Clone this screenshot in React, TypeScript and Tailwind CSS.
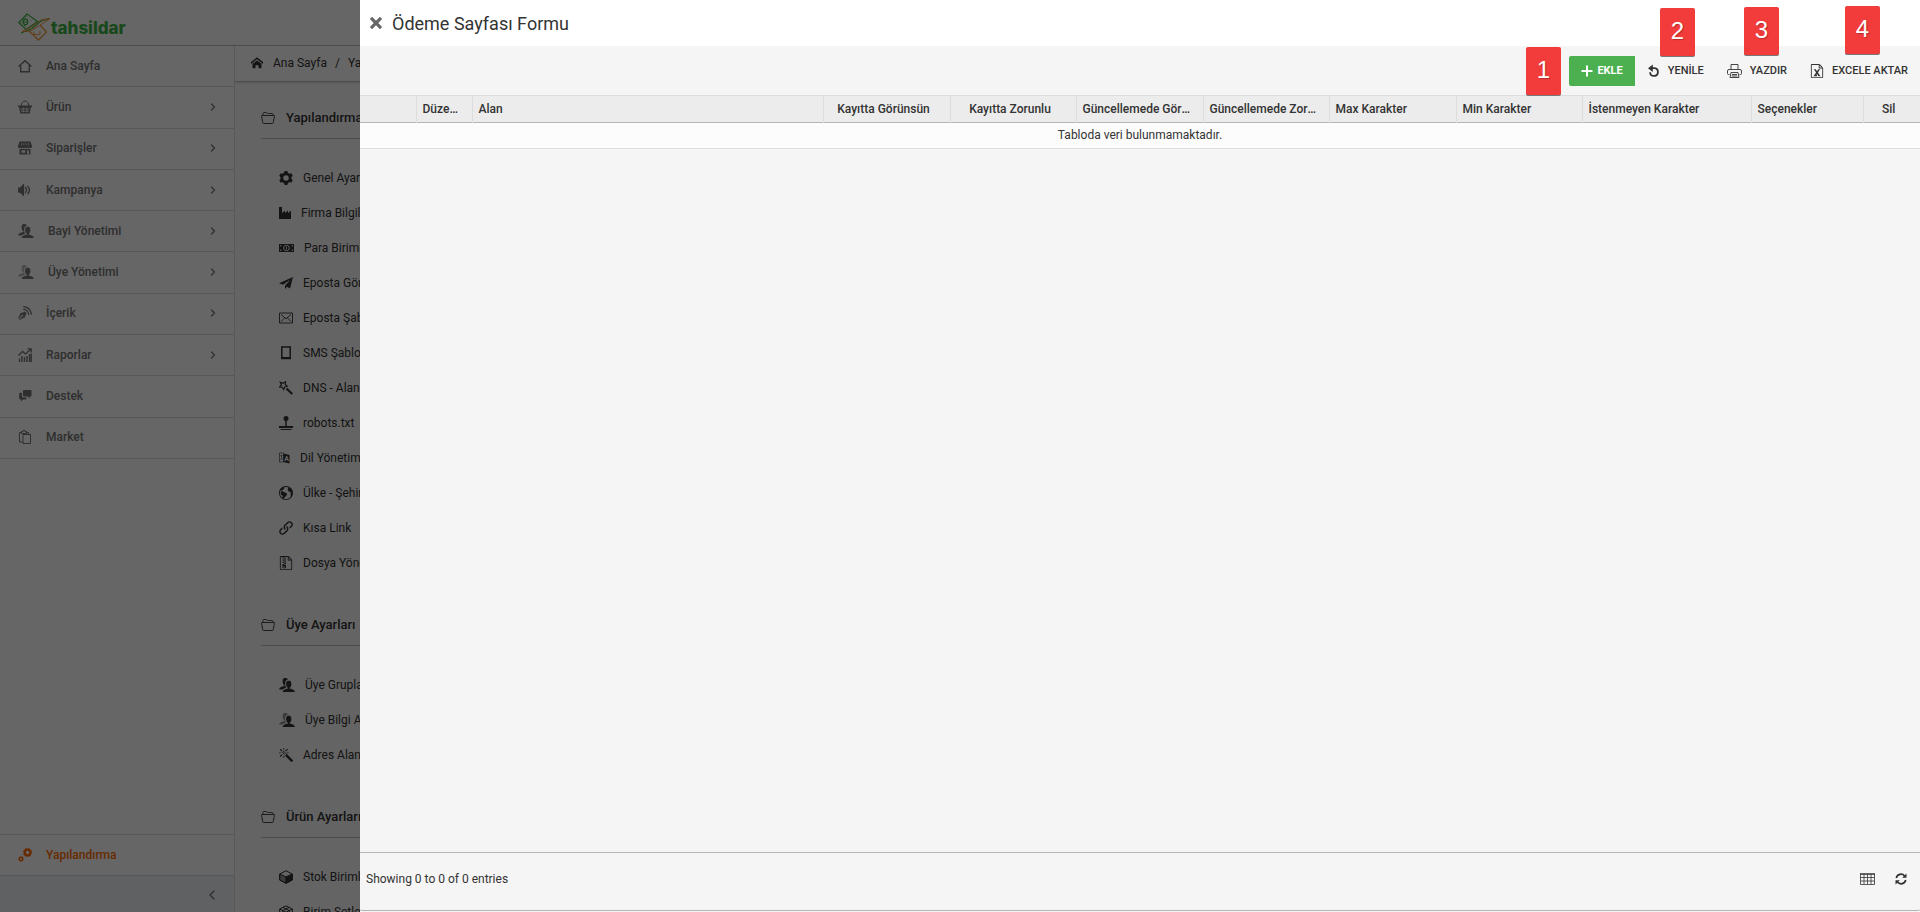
import type { ReactNode } from "react";
import clsx from "clsx";
import {
  ImBlog,
  ImCog,
  ImCross,
  ImEarth,
  ImFileExcel,
  ImFileZip,
  ImHome,
  ImLink,
  ImMagicWand,
  ImUsers,
  ImVolumeMedium,
} from "react-icons/im";
import { FiChevronLeft, FiChevronRight } from "react-icons/fi";

interface GlyphProps {
  children: ReactNode;
  w?: number;
  h?: number;
  sw?: number;
}

// Line icon on a 1:1 pixel grid
const Glyph = ({ children, w = 14, h = 14, sw = 1 }: GlyphProps) => (
  <svg
    width={w}
    height={h}
    viewBox={`0 0 ${w} ${h}`}
    fill="none"
    stroke="currentColor"
    strokeWidth={sw}
    className="shrink-0"
    aria-hidden="true"
  >
    {children}
  </svg>
);

const HouseIcon = () => (
  <Glyph sw={1.4}>
    <path d="M.6 7.6 7 1.8l6.4 5.8M2.7 6.6v6.2h8.6V6.6" />
  </Glyph>
);

const BasketIcon = () => (
  <Glyph>
    <path d="M3 6c.4-3 2-5 4-5s3.600 2 4 5" />
    <path d="M0 5.500h14v1.500H13l-1.300 6.500H2.300L1 7H0z" fill="currentColor" stroke="none" />
    <path d="M2.500 9h9M3 11.300h8M5.200 7.500v5M8.800 7.500v5" stroke="#fff" strokeWidth=".8" />
  </Glyph>
);

const StoreIcon = () => (
  <Glyph>
    <path
      d="M1.500.5h11L14 5v1a1.300 1.300 0 0 1-2.300.6 1.300 1.300 0 0 1-2.400 0 1.400 1.400 0 0 1-2.300 0 1.400 1.400 0 0 1-2.300 0 1.300 1.300 0 0 1-2.400 0A1.300 1.300 0 0 1 0 6V5zM1.500 8h11v5.500h-11z"
      fill="currentColor"
      stroke="none"
    />
    <path d="M3.500 9.300h3.700v2.400H3.500zM9.200 9.300h1.700v4.200H9.200z" fill="#fff" stroke="none" />
    <path d="M3.500 2v2.500M5.800 2v2.500M8.200 2v2.500M10.500 2v2.500" stroke="#fff" strokeWidth=".6" />
  </Glyph>
);

const UsersIcon = ({ faded = false }: { faded?: boolean }) => (
  <ImUsers className={clsx("w-4 h-3.5 shrink-0", faded && "[&>path:last-child]:opacity-50")} />
);

const ReportIcon = () => (
  <Glyph>
    <path d="M.5 7.500 4.500 3.500l3 2.500 5-4.500M9.500.8h3.700v3.700" strokeWidth="1.300" />
    <path d="M1.500 10.500V14M4 8v6M6.500 9v5M9 8v6M11.500 6v8M13.200 5.500V14" strokeWidth="1.400" />
  </Glyph>
);

const ChatIcon = () => (
  <Glyph>
    <path
      d="M6 1h6.500a1 1 0 0 1 1 1v4.500a1 1 0 0 1-1 1H12v2l-2-2H6a1 1 0 0 1-1-1V2a1 1 0 0 1 1-1zM4 3.800V7a1.500 1.500 0 0 0 1.500 1.500h3v1a1 1 0 0 1-1 1H5l-2 2v-2h-.8a1 1 0 0 1-1-1V4.800a1 1 0 0 1 1-1z"
      fill="currentColor"
      stroke="none"
    />
  </Glyph>
);

const MarketIcon = () => (
  <Glyph>
    <path d="M4.500 12H1.500V2.500h2M8.500 2.500h2V4M3.500 3.500v-2h1.500v-1h2v1h1.500v2z" />
    <path d="M5 4.500h7.500v9H5z" />
  </Glyph>
);

const GearsIcon = () => (
  <Glyph>
    <circle cx="9.500" cy="4.500" r="2.800" strokeWidth="2.200" />
    <circle cx="9.500" cy="4.500" r="4.200" strokeDasharray="1.650 1.650" />
    <circle cx="3" cy="11" r="1.700" strokeWidth="1.500" />
    <circle cx="3" cy="11" r="2.700" strokeWidth=".6" strokeDasharray="1.060 1.060" />
  </Glyph>
);

const FolderIcon = () => (
  <Glyph h={12}>
    <path d="M2 3.500V1.500a1 1 0 0 1 1-1h2.500l1 1h4.500a1 1 0 0 1 1 1v1" strokeWidth=".8" />
    <path
      d="M1 3.500h12c.4 0 .6.200.5.600l-1.300 6.700c-.1.500-.3.700-.7.700h-9c-.4 0-.6-.2-.7-.7L.5 4.100c0-.4.100-.6.500-.6z"
      strokeWidth=".9"
    />
  </Glyph>
);

const FactoryIcon = () => (
  <Glyph w={12}>
    <path d="M0 13V1h3v6l3-2.500V7l3-2.500V7l3-2.500V13z" fill="currentColor" stroke="none" />
  </Glyph>
);

const MoneyIcon = () => (
  <Glyph w={15} h={10}>
    <path d="M0 1h15v8H0z" fill="currentColor" stroke="none" />
    <circle cx="7.500" cy="5" r="2.800" stroke="#fff" strokeWidth=".9" />
    <path d="M7.500 3.500v3M1.500 3.500v-1h1M13.500 3.500v-1h-1M1.500 6.500v1h1M13.500 6.500v1h-1" stroke="#fff" strokeWidth=".8" />
  </Glyph>
);

const PlaneIcon = () => (
  <Glyph>
    <path d="M14 1 0 7.200l4 1.600L11.500 3.500 6 9.800V13l2-2.300 3 1.800z" fill="currentColor" stroke="none" />
  </Glyph>
);

const MailIcon = () => (
  <Glyph h={12}>
    <path d="M.5 1h13v10H.5zM2 2.500 7 6.800l5-4.300M2 9.500l3.300-3.300M12 9.500 8.700 6.200" strokeWidth=".9" />
  </Glyph>
);

const TabletIcon = () => (
  <Glyph>
    <path d="M2.800 1h8.400v11.500H2.800z" strokeWidth="1.500" />
    <path d="M2.500 12h9" strokeWidth="2" />
  </Glyph>
);

const WandIcon = () => (
  <Glyph>
    <path d="M7.500 7.500 13.300 13" strokeWidth="2.200" />
    <path d="M1.300 1.200 4 2.300 6.500.8 6.300 3.500 8.200 5.300 5.700 6 4.600 8.500 3.200 6.200.6 6 2.400 4z" strokeWidth="1.200" />
  </Glyph>
);

const JoystickIcon = () => (
  <Glyph>
    <circle cx="7" cy="2.500" r="2.500" fill="currentColor" stroke="none" />
    <path d="M7 4v7" strokeWidth="1.500" />
    <path d="M0 11h14" strokeWidth="2" />
    <path d="M1.500 13.500h11" />
  </Glyph>
);

const LanguageIcon = () => (
  <Glyph w={11} h={12}>
    <path d="M.5 1h4v9h-4zM1.500 3.500h2M2.500 3v3.500L1.500 8M2.500 6l1.200 1.500" strokeWidth=".6" />
    <path d="M4.500 1.500 10.500 3v8.500L4.500 10z" fill="currentColor" stroke="none" />
    <text x="7.500" y="9" fontSize="7" fontWeight="700" textAnchor="middle" fill="#fff" stroke="none">
      A
    </text>
  </Glyph>
);

const CubeIcon = () => (
  <Glyph>
    <path d="M7 .8 13.300 4v6L7 13.300.7 10V4z" />
    <path d="M7 6.800 13.300 4v6L7 13.300z" fill="currentColor" />
    <path d="M.7 4 7 6.800v6.500L.7 10z" fill="currentColor" fillOpacity=".5" />
  </Glyph>
);

const CubesIcon = () => (
  <Glyph>
    <path d="M7 .8 13.300 4v6L7 13.300.7 10V4zM.7 4 7 7.200 13.300 4M7 7.200v6M4 2.400l6.300 3.200v6M10 2.400 3.700 5.600v6M.7 7 7 10.200 13.300 7" />
  </Glyph>
);

const PlusIcon = () => (
  <Glyph w={12} h={12} sw={2}>
    <path d="M6 .5v11M.5 6h11" />
  </Glyph>
);

const UndoIcon = () => (
  <Glyph w={12} h={13} sw={1.8}>
    <path d="M3.500 4.200h3a3.900 3.900 0 1 1-4.400 4" />
    <path d="M0 4.200 4.800.5v7.400z" fill="currentColor" stroke="none" />
  </Glyph>
);

const PrinterIcon = () => (
  <Glyph w={15} h={14}>
    <path
      d="M4 5.500V.5h7v5M2.500 10.500H1.500a1 1 0 0 1-1-1V7a1.500 1.500 0 0 1 1.500-1.500h11A1.500 1.500 0 0 1 14.500 7v2.500a1 1 0 0 1-1 1h-1M4 8.500h7l1 5H3zM5 10.500h5M4.700 12h5.600"
      strokeWidth=".9"
    />
  </Glyph>
);

const GridIcon = () => (
  <Glyph w={15} h={12}>
    <path d="M.5 1v10.500h14V1M.5 4.500h14M.5 8h14M4 1v10M7.500 1v10M11 1v10" strokeWidth=".8" />
    <path d="M0 1h15" strokeWidth="1.500" />
  </Glyph>
);

const RefreshIcon = () => (
  <Glyph w={12} h={12} sw={1.7}>
    <path d="M1.300 5A4.700 4.700 0 0 1 9.600 3M10.700 7A4.700 4.700 0 0 1 2.400 9" />
    <path d="M11.500.5v4.300H7.200zM.5 11.500V7.200h4.300z" fill="currentColor" stroke="none" />
  </Glyph>
);

const LogoMark = () => (
  <svg width="32" height="29" viewBox="0 0 32 29" fill="none" aria-hidden="true">
    <path d="M9 1 .8 9.500 8 16.500 19.500 8.500z" stroke="#43b649" strokeWidth="1.300" />
    <path d="M9 3.500 3.300 9.500 8 14" stroke="#43b649" strokeDasharray="1 1" />
    <ellipse cx="7.500" cy="9" rx="2.200" ry="2.800" stroke="#43b649" strokeWidth="1.300" />
    <path d="M6 9h3M12 6.500l1 1" stroke="#43b649" />
    <path d="M3 20 14 15.500 23 8 31 5.500" stroke="#43b649" strokeWidth="1.300" />
    <path d="M4 18.500 15 13l8-6 9-1.500L21 13l-9 5z" stroke="#f29a3f" strokeWidth="1" />
    <path d="m11 18 9.500 9 8-8-6.500-7" stroke="#f29a3f" strokeWidth="1.300" />
    <path d="M16 18.500v3h3M19 22l3-1v-3" stroke="#f29a3f" />
  </svg>
);

interface MenuEntry {
  label: string;
  icon: ReactNode;
  expandable?: boolean;
}

const menu: MenuEntry[] = [
  { label: "Ana Sayfa", icon: <HouseIcon /> },
  { label: "Ürün", icon: <BasketIcon />, expandable: true },
  { label: "Siparişler", icon: <StoreIcon />, expandable: true },
  { label: "Kampanya", icon: <ImVolumeMedium size={14} />, expandable: true },
  { label: "Bayi Yönetimi", icon: <UsersIcon />, expandable: true },
  { label: "Üye Yönetimi", icon: <UsersIcon faded />, expandable: true },
  { label: "İçerik", icon: <ImBlog size={14} />, expandable: true },
  { label: "Raporlar", icon: <ReportIcon />, expandable: true },
  { label: "Destek", icon: <ChatIcon /> },
  { label: "Market", icon: <MarketIcon /> },
];

const sections: { title: string; items: MenuEntry[] }[] = [
  {
    title: "Yapılandırma",
    items: [
      { label: "Genel Ayarlar", icon: <ImCog size={14} /> },
      { label: "Firma Bilgileri", icon: <FactoryIcon /> },
      { label: "Para Birimleri", icon: <MoneyIcon /> },
      { label: "Eposta Gönderim", icon: <PlaneIcon /> },
      { label: "Eposta Şablonları", icon: <MailIcon /> },
      { label: "SMS Şablonları", icon: <TabletIcon /> },
      { label: "DNS - Alan Adı", icon: <WandIcon /> },
      { label: "robots.txt", icon: <JoystickIcon /> },
      { label: "Dil Yönetimi", icon: <LanguageIcon /> },
      { label: "Ülke - Şehir", icon: <ImEarth size={14} /> },
      { label: "Kısa Link", icon: <ImLink size={14} /> },
      { label: "Dosya Yönetimi", icon: <ImFileZip size={14} /> },
    ],
  },
  {
    title: "Üye Ayarları",
    items: [
      { label: "Üye Grupları", icon: <UsersIcon /> },
      { label: "Üye Bilgi Alanları", icon: <UsersIcon faded /> },
      { label: "Adres Alanları", icon: <ImMagicWand size={14} /> },
    ],
  },
  {
    title: "Ürün Ayarları",
    items: [
      { label: "Stok Birimleri", icon: <CubeIcon /> },
      { label: "Birim Setleri", icon: <CubesIcon /> },
    ],
  },
];

const columns = [
  { label: "", width: "w-[56px]" },
  { label: "Düzenle", width: "w-[56px]" },
  { label: "Alan", width: "" },
  { label: "Kayıtta Görünsün", width: "w-[127px]", center: true },
  { label: "Kayıtta Zorunlu", width: "w-[126px]", center: true },
  { label: "Güncellemede Görünsün", width: "w-[127px]" },
  { label: "Güncellemede Zorunlu", width: "w-[126px]" },
  { label: "Max Karakter", width: "w-[127px]" },
  { label: "Min Karakter", width: "w-[126px]" },
  { label: "İstenmeyen Karakter", width: "w-[169px]" },
  { label: "Seçenekler", width: "w-[112px]" },
  { label: "Sil", width: "w-[57px]", center: true },
];

const markers = [
  { label: "1", place: "top-[47px] right-[359px]" },
  { label: "2", place: "top-2 right-[225px]" },
  { label: "3", place: "top-[7px] right-[141px]" },
  { label: "4", place: "top-1.5 right-10" },
];

const Sidebar = () => (
  <nav className="w-[235px] shrink-0 flex flex-col border-r border-[#dcdcdc] text-[#757575] font-medium">
    <ul className="h-[413px] flex flex-col">
      {menu.map((item) => (
        <li key={item.label} className="flex-1 border-b border-[#dcdcdc]">
          <a href="#" className="h-full flex items-center pl-[18px] pr-[15px] pb-px">
            {item.icon}
            <span className="ml-3.5 flex-1">{item.label}</span>
            {item.expandable && <FiChevronRight size={12} strokeWidth={2.5} />}
          </a>
        </li>
      ))}
    </ul>
    <a
      href="#"
      className="mt-auto h-[42px] flex items-center gap-3.5 pl-[18px] border-y border-[#dcdcdc] text-[#ff6c00]"
    >
      <GearsIcon />
      Yapılandırma
    </a>
    <button className="h-9 flex items-center justify-end pr-3.5 pt-0.5 bg-[#eef2f5]" title="Menüyü daralt">
      <FiChevronLeft size={16} />
    </button>
  </nav>
);

const Settings = () => (
  <main className="flex-1 min-w-0 overflow-hidden bg-[#fafafa] text-[#333333]">
    <div className="h-9 flex items-center pl-4 pb-0.5 bg-white border-b border-[#bdbdbd] shadow-sm">
      <ImHome size={12} />
      <a href="#" className="ml-2.5">
        Ana Sayfa
      </a>
      <span className="mx-2">/</span>
      <span>Yapılandırma</span>
    </div>
    <div className="pt-4 px-[26px]">
      {sections.map((section) => (
        <section key={section.title} className="mb-[25px] whitespace-nowrap">
          <h2 className="h-[41px] flex items-center gap-[11px] border-b border-[#bdbdbd] text-[13px] font-medium">
            <FolderIcon />
            {section.title}
          </h2>
          <ul className="pt-[21px] pl-[18px]">
            {section.items.map((item) => (
              <li key={item.label}>
                <a href="#" className="h-[35px] flex items-center gap-2.5">
                  {item.icon}
                  {item.label}
                </a>
              </li>
            ))}
          </ul>
        </section>
      ))}
    </div>
  </main>
);

const ToolButton = ({ icon, label }: { icon: ReactNode; label: string }) => (
  <button className="h-[30px] flex items-center gap-2 pl-3 pr-[11px] font-medium">
    {icon}
    <span className="pt-0.5">{label}</span>
  </button>
);

const FormPanel = () => (
  <div
    role="dialog"
    aria-labelledby="panel-title"
    className="absolute inset-y-0 right-0 left-[360px] flex flex-col bg-[#f5f5f5] text-[#333333]"
  >
    <header className="h-[46px] shrink-0 flex items-center gap-2.5 pl-2.5 bg-white">
      <button title="Kapat" className="text-[#666666]">
        <ImCross size={12} />
      </button>
      <h1 id="panel-title" className="pt-0.5 text-lg leading-6">
        Ödeme Sayfası Formu
      </h1>
    </header>

    <div className="h-[49px] shrink-0 flex items-center justify-end pr-px text-[11px]">
      <button className="h-[30px] flex items-center gap-1 px-3 mr-px rounded-l-xs bg-[#4caf50] text-white font-bold">
        <PlusIcon />
        <span className="pt-0.5">EKLE</span>
      </button>
      <ToolButton icon={<UndoIcon />} label="YENİLE" />
      <ToolButton icon={<PrinterIcon />} label="YAZDIR" />
      <ToolButton icon={<ImFileExcel size={14} />} label="EXCELE AKTAR" />
    </div>

    <div className="flex-1 min-h-0">
      <table className="w-full table-fixed border-collapse">
        <thead>
          <tr className="h-[27px] bg-[#ececec] border-t border-t-[#dddddd] border-b border-b-[#b5b5b5]">
            {columns.map((col, i) => (
              <th
                key={i}
                className={clsx(
                  "pl-1.5 font-medium truncate border-r border-r-[#dddddd] last:border-r-0",
                  col.width,
                  col.center ? "pr-3 text-center" : "pr-2 text-left"
                )}
              >
                {col.label}
              </th>
            ))}
          </tr>
        </thead>
        <tbody>
          <tr className="h-[26px] bg-[#fcfcfc] border-b border-[#dddddd]">
            <td colSpan={columns.length} className="pb-0.5 text-center">
              Tabloda veri bulunmamaktadır.
            </td>
          </tr>
        </tbody>
      </table>
    </div>

    <footer className="h-[59px] mb-px shrink-0 flex items-center justify-between pl-1.5 pr-[13px] pb-1.5 border-y border-[#b5b5b5] rounded-b-xs">
      <span>Showing 0 to 0 of 0 entries</span>
      <div className="flex gap-5">
        <button title="Sütunlar">
          <GridIcon />
        </button>
        <button title="Yenile">
          <RefreshIcon />
        </button>
      </div>
    </footer>

    {markers.map((marker) => (
      <span
        key={marker.label}
        className={clsx(
          "absolute w-[35px] h-12 flex items-center justify-center pb-0.5 rounded-xs bg-[#f23b3b] text-white text-2xl shadow-[0_1px_0_#777777] [text-shadow:1px_1px_1px_#00000040]",
          "font-['Liberation_Sans',sans-serif]",
          marker.place
        )}
      >
        {marker.label}
      </span>
    ))}
  </div>
);

export default function App() {
  return (
    <div className="relative h-screen overflow-hidden flex flex-col bg-white text-xs font-[Roboto,sans-serif]">
      <header className="h-[46px] shrink-0 flex items-center pl-[18px] pt-2.5 border-b border-[#bdbdbd]">
        <LogoMark />
        <span className="ml-px text-[17px] leading-5 font-extrabold text-[#3fb548] font-[Inter,sans-serif]">
          tahsildar
        </span>
      </header>
      <div className="flex-1 min-h-0 flex">
        <Sidebar />
        <Settings />
      </div>
      <div className="absolute inset-0 bg-black/60" />
      <FormPanel />
    </div>
  );
}
